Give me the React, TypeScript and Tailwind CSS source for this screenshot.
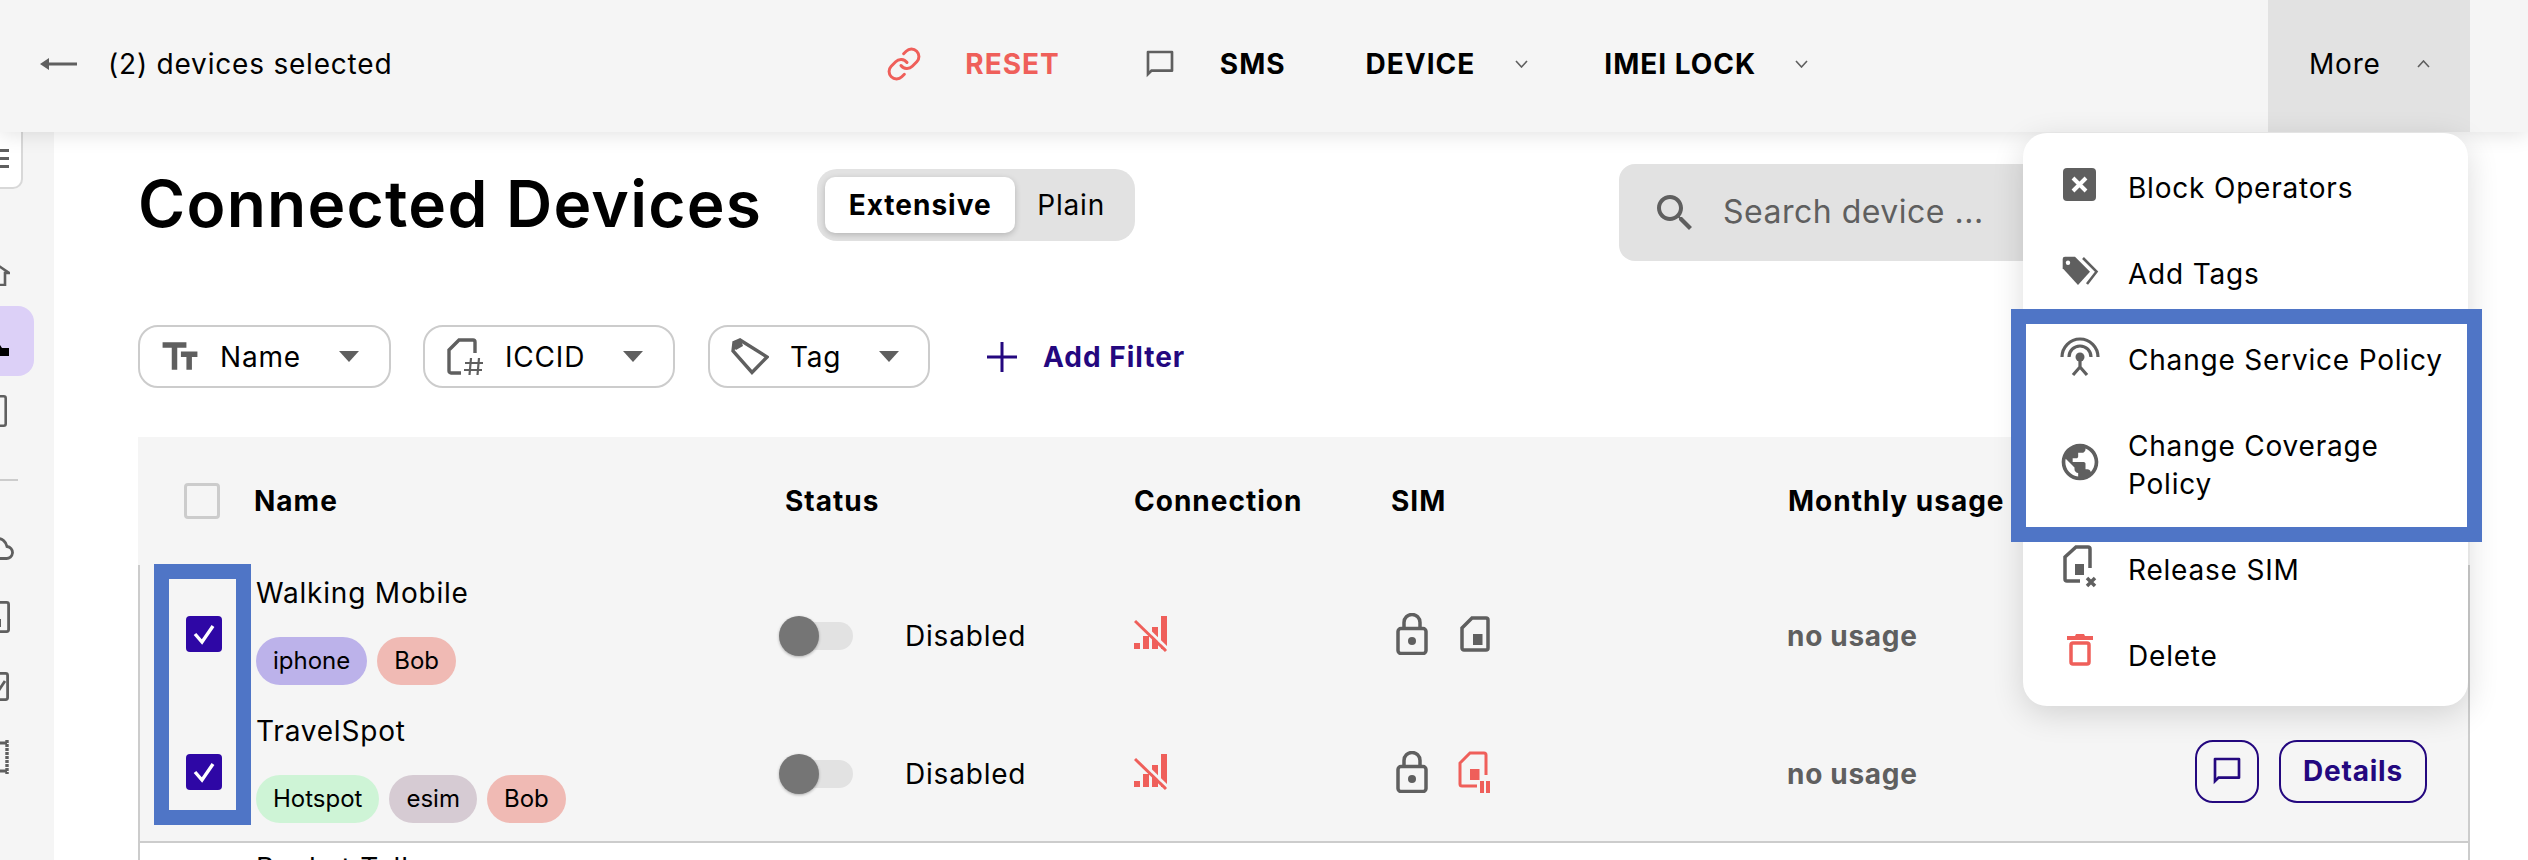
import React from "react";
import { Link } from "lucide-react";

const GRAY = "#5f5f5f";
const RED = "#ef5f5a";
const INDIGO = "#24087f";

const Chevron = ({ up }: { up?: boolean }) => (
  <svg width="13" height="8" viewBox="0 0 13 8" fill="none" stroke={GRAY} strokeWidth="1.6" className="shrink-0">
    <path d={up ? "M1 7l5.5-6L12 7" : "M1 1l5.5 6L12 1"} />
  </svg>
);

const Caret = () => (
  <svg width="20" height="11" viewBox="0 0 20 11" fill={GRAY} className="shrink-0">
    <path d="M0 0h20L10 11z" />
  </svg>
);

const ChatIcon = ({ color }: { color: string }) => (
  <svg width="32" height="32" viewBox="0 0 24 24" fill={color} fillRule="evenodd" className="shrink-0">
    <path d="M3 2h18a1 1 0 0 1 1 1v14a1 1 0 0 1-1 1H6l-4 4V3a1 1 0 0 1 1-1zm1 2v13.2L5.2 16H20V4z" />
  </svg>
);

const SignalOff = () => (
  <svg width="34" height="38" viewBox="0 0 34 38" className="shrink-0">
    <g fill={RED}>
      <rect x="0" y="28" width="6" height="6" />
      <rect x="9" y="21" width="6" height="13" />
      <rect x="18" y="12" width="6" height="22" />
      <rect x="27" y="1" width="6" height="33" />
    </g>
    <path d="M3 4l32 31" stroke="#f5f5f5" strokeWidth="3" />
    <path d="M1 6l31 30" stroke={RED} strokeWidth="3" />
  </svg>
);

const LockIcon = () => (
  <svg width="32" height="42" viewBox="0 0 32 42" fill="none" stroke={GRAY} strokeWidth="3.5" className="shrink-0">
    <rect x="2" y="15.5" width="28" height="25" rx="3" />
    <path d="M8 15V9.5a8 8 0 0 1 16 0V15" />
    <circle cx="16" cy="28" r="4" fill={GRAY} stroke="none" />
  </svg>
);

const SimIcon = () => (
  <svg width="30" height="36" viewBox="0 0 30 36" fill="none" stroke={GRAY} strokeWidth="3.5" className="ml-[32px] shrink-0">
    <path d="M2 12L12 2h14a2 2 0 0 1 2 2v28a2 2 0 0 1-2 2H4a2 2 0 0 1-2-2z" />
    <rect x="13" y="18" width="9.5" height="11" fill={GRAY} stroke="none" />
  </svg>
);

const SimPaused = () => (
  <svg width="34" height="44" viewBox="0 0 34 44" fill="none" stroke={RED} strokeWidth="3" className="ml-[29px] shrink-0">
    <path d="M20 36H5a2 2 0 0 1-2-2V13L13 3h14a2 2 0 0 1 2 2v20" />
    <g fill={RED} stroke="none">
      <rect x="13" y="19" width="9.5" height="11" />
      <rect x="23" y="31" width="4" height="12" />
      <rect x="29" y="31" width="4" height="12" />
    </g>
  </svg>
);

const Chip = ({ label, color }: { label: string; color: string }) => (
  <span className={`h-12 px-[17px] rounded-full flex items-center text-[24px] text-black ${color}`}>{label}</span>
);

const Toggle = () => (
  <div className="relative w-[74px] h-[40px] flex items-center -ml-[6px] shrink-0">
    <div className="h-[28px] w-[64px] ml-[10px] rounded-full bg-[#e2e2e2]" />
    <div className="absolute left-0 top-0 w-[40px] h-[40px] rounded-full bg-[#757575] shadow-[0_1px_3px_rgba(0,0,0,0.3)]" />
  </div>
);

const Check = () => (
  <div className="w-9 h-9 rounded-[4px] bg-[#2e07a5] flex items-center justify-center">
    <svg width="26" height="26" viewBox="0 0 26 26" fill="none" stroke="#fff" strokeWidth="3.4">
      <path d="M4 13l7 8L22 5" />
    </svg>
  </div>
);

const FilterButton = ({ icon, label, width, gap }: { icon: React.ReactNode; label: string; width: string; gap: string }) => (
  <div className={`h-[63px] border-2 border-[#cccccc] rounded-[20px] flex items-center bg-white text-[28px] tracking-[0.8px] text-black ${width}`}>
    <div className="w-[80px] flex justify-center shrink-0">{icon}</div>
    <span>{label}</span>
    <div className={`ml-auto ${gap}`}>
      <Caret />
    </div>
  </div>
);

const Row = ({ name, chips, sim, actions }: { name: string; chips: { label: string; color: string }[]; sim: React.ReactNode; actions?: boolean }) => (
  <div className="h-[138px] grid grid-cols-[114px_531px_349px_257px_396px_1fr] items-center">
    <div className="pl-[46px]">
      <Check />
    </div>
    <div className="self-start pl-[2px] pt-[10px]">
      <div className="text-[28px] leading-9 tracking-[0.8px] text-black">{name}</div>
      <div className="flex gap-[10px] mt-[26px]">
        {chips.map((c, i) => (
          <Chip key={i} {...c} />
        ))}
      </div>
    </div>
    <div className="flex items-center mt-1">
      <Toggle />
      <span className="ml-[52px] text-[28px] tracking-[0.8px] text-black">Disabled</span>
    </div>
    <div>
      <SignalOff />
    </div>
    <div className="flex items-center pl-[5px]">
      <LockIcon />
      {sim}
    </div>
    <div className="flex items-center mt-1">
      <span className="text-[28px] font-bold tracking-[0.7px] text-[#5f5f5f]">no usage</span>
      {actions && (
        <div className="ml-auto mr-[41px] -mt-[6px] flex gap-[20px]">
          <div className="w-[64px] h-[63px] border-2 border-[#24087f] rounded-[18px] flex items-center justify-center">
            <ChatIcon color={INDIGO} />
          </div>
          <div className="w-[148px] h-[63px] border-2 border-[#24087f] rounded-[18px] flex items-center justify-center text-[28px] font-bold tracking-[0.8px] text-[#24087f]">
            Details
          </div>
        </div>
      )}
    </div>
  </div>
);

const MenuItem = ({ icon, children, danger }: { icon: React.ReactNode; children: React.ReactNode; danger?: boolean }) => (
  <div className="flex items-center py-6 pl-[35px]">
    <div className={`w-[44px] h-[38px] flex items-center justify-center shrink-0 -translate-y-[3px] ${danger ? "text-[#ef5f5a]" : "text-[#5f5f5f]"}`}>{icon}</div>
    <div className="ml-[26px] w-[320px] text-[28px] leading-[38px] tracking-[0.8px] text-black">{children}</div>
  </div>
);

function ActionMenu() {
  return (
    <div className="absolute left-[2023px] top-[133px] w-[445px] bg-white rounded-[24px] pt-3 pb-[7px] shadow-[0_8px_32px_rgba(0,0,0,0.14)] z-20">
      <MenuItem
        icon={
          <svg width="44" height="44" viewBox="0 0 44 44" className="shrink-0">
            <rect x="5" y="5" width="33" height="33" rx="4" fill="currentColor" />
            <path d="M15 15l13 13M28 15L15 28" stroke="#fff" strokeWidth="4" />
          </svg>
        }
      >
        Block Operators
      </MenuItem>
      <MenuItem
        icon={
          <svg width="44" height="44" viewBox="0 0 44 44" fill="none" className="shrink-0">
            <path d="M7 7.7h10L32 22.7 20 36 4.7 19.3V10a2.3 2.3 0 0 1 2.3-2.3z" fill="currentColor" />
            <circle cx="10" cy="13.7" r="2.2" fill="#fff" />
            <path d="M25 9l13.5 13.7L29 35" stroke="currentColor" strokeWidth="2.6" />
          </svg>
        }
      >
        Add Tags
      </MenuItem>
      <MenuItem
        icon={
          <svg width="44" height="44" viewBox="0 0 44 44" fill="none" stroke="currentColor" strokeWidth="3.2" className="shrink-0">
            <path d="M4 22a18 18 0 0 1 36 0" />
            <path d="M11 22a11 11 0 0 1 22 0" />
            <circle cx="22" cy="22" r="4.5" fill="currentColor" stroke="none" />
            <path d="M22 22v10l-7 8M22 32l7 8" />
          </svg>
        }
      >
        Change Service Policy
      </MenuItem>
      <MenuItem
        icon={
          <svg width="44" height="44" viewBox="0 0 24 24" fill="currentColor" className="shrink-0">
            <path d="M12 2C6.48 2 2 6.48 2 12s4.48 10 10 10 10-4.48 10-10S17.52 2 12 2zm-1 17.93c-3.95-.49-7-3.85-7-7.93 0-.62.08-1.21.21-1.79L9 15v1c0 1.1.9 2 2 2v1.93zm6.9-2.54c-.26-.81-1-1.39-1.9-1.39h-1v-3c0-.55-.45-1-1-1H8v-2h2c.55 0 1-.45 1-1V7h2c1.1 0 2-.9 2-2v-.41c2.93 1.19 5 4.06 5 7.41 0 2.08-.8 3.97-2.1 5.39z" />
          </svg>
        }
      >
        Change Coverage Policy
      </MenuItem>
      <MenuItem
        icon={
          <svg width="44" height="46" viewBox="0 0 44 46" fill="none" stroke="currentColor" strokeWidth="3.5" className="shrink-0">
            <path d="M22 37H9a2 2 0 0 1-2-2V13L18 3h12a2 2 0 0 1 2 2v19" />
            <rect x="17" y="20" width="9" height="11" fill="currentColor" stroke="none" />
            <path d="M29 34l8 8M37 34l-8 8" />
          </svg>
        }
      >
        Release SIM
      </MenuItem>
      <MenuItem
        danger
        icon={
          <svg width="44" height="44" viewBox="0 0 44 44" fill="none" className="shrink-0">
            <rect x="13" y="12" width="18" height="21" rx="2" stroke="currentColor" strokeWidth="3.5" />
            <path d="M9 5h8l1-2h8l1 2h8v4H9z" fill="currentColor" />
          </svg>
        }
      >
        Delete
      </MenuItem>
    </div>
  );
}

function Sidebar() {
  return (
    <aside className="w-[54px] shrink-0 bg-[#f5f5f5] overflow-hidden flex flex-col">
      <div className="w-[23px] h-[57px] bg-white border-r-2 border-b-2 border-[#d8d8d8] rounded-br-[10px] pt-[17px] flex flex-col gap-[5px]">
        <div className="h-[3px] w-[9px] bg-[#5f5f5f]" />
        <div className="h-[3px] w-[9px] bg-[#5f5f5f]" />
        <div className="h-[3px] w-[9px] bg-[#5f5f5f]" />
      </div>
      <div className="w-[10px] h-[23px] mt-[74px] flex justify-end">
        <svg width="28" height="23" viewBox="0 0 28 23" fill="none" stroke={GRAY} strokeWidth="2.6" className="shrink-0">
          <path d="M5 22V10H1L14 1l13 9h-4v12z" />
        </svg>
      </div>
      <div className="w-[34px] h-[70px] mt-5 bg-[#dcd0f7] rounded-r-[16px] pt-[39px] flex items-start">
        <svg width="9" height="11" viewBox="0 0 9 11" fill="#000" className="shrink-0">
          <path d="M0 0l2 3h7v8H0z" />
        </svg>
      </div>
      <div className="w-[7px] h-[32px] mt-[19px] flex justify-end">
        <svg width="26" height="32" viewBox="0 0 26 32" fill="none" stroke={GRAY} strokeWidth="2.6" className="shrink-0">
          <rect x="1.3" y="1.3" width="23.4" height="29.4" rx="2" />
          <rect x="0" y="20" width="6" height="6" fill={GRAY} stroke="none" />
        </svg>
      </div>
      <div className="w-[18px] h-[2px] mt-[52px] bg-[#cccccc]" />
      <div className="w-[14px] h-[23px] mt-[56px] flex justify-end">
        <svg width="34" height="23" viewBox="0 0 34 23" fill="none" stroke={GRAY} strokeWidth="2.8" className="shrink-0">
          <path d="M8 21.5a6.5 6.5 0 0 1 0-13C10 4 14 1.5 18 1.5c4 0 8 3 9 8a6 6 0 0 1-1 12z" />
        </svg>
      </div>
      <div className="w-[10px] h-[32px] mt-[41px] flex justify-end">
        <svg width="26" height="32" viewBox="0 0 26 32" fill="none" stroke={GRAY} strokeWidth="2.8" className="shrink-0">
          <rect x="1.4" y="1.4" width="23.2" height="29.2" rx="2" />
          <rect x="6" y="18" width="11" height="8" fill={GRAY} stroke="none" />
        </svg>
      </div>
      <div className="w-[9px] h-[29px] mt-[39px] flex justify-end">
        <svg width="26" height="29" viewBox="0 0 26 29" fill="none" stroke={GRAY} strokeWidth="2.8" className="shrink-0">
          <rect x="1.4" y="1.4" width="23.2" height="26.2" rx="2" />
          <path d="M12 16l4 2 6-9" />
        </svg>
      </div>
      <div className="w-[11px] h-[36px] mt-[38px] flex justify-end">
        <svg width="26" height="36" viewBox="0 0 26 36" fill="none" stroke={GRAY} strokeWidth="2.8" className="shrink-0">
          <path d="M22 1v34" strokeDasharray="3 1" strokeWidth="3.4" />
          <path d="M1 4h21M1 32h21" />
          <rect x="2" y="9" width="6" height="3" fill={GRAY} stroke="none" />
        </svg>
      </div>
    </aside>
  );
}

function App() {
  return (
    <div className="relative w-full h-[860px] overflow-hidden bg-white font-['Inter',sans-serif] text-black">
      <header className="relative z-10 h-[132px] pb-1 flex items-center bg-[#f5f5f5] shadow-[0_2px_20px_rgba(0,0,0,0.12)]">
        <svg width="37" height="14" viewBox="0 0 37 14" fill={GRAY} className="ml-[40px] shrink-0">
          <path d="M0 7l9-6v4.5h28v3H9V13z" />
        </svg>
        <span className="ml-[31px] text-[28px] tracking-[0.8px] text-black">(2) devices selected</span>
        <Link size={36} color={RED} strokeWidth={2} className="ml-[494px] shrink-0" />
        <span className="ml-[43px] text-[28px] font-bold tracking-[1px] text-[#ef5f5a]">RESET</span>
        <div className="ml-[84px]">
          <ChatIcon color={GRAY} />
        </div>
        <span className="ml-[44px] text-[28px] font-bold tracking-[1px]">SMS</span>
        <span className="ml-[80px] text-[28px] font-bold tracking-[1px]">DEVICE</span>
        <div className="ml-[40px]">
          <Chevron />
        </div>
        <span className="ml-[76px] text-[28px] font-bold tracking-[1px]">IMEI LOCK</span>
        <div className="ml-[39px]">
          <Chevron />
        </div>
        <div className="ml-auto mr-[58px] w-[202px] self-stretch -mb-1 pb-1 bg-[#e2e2e2] flex items-center pl-[41px]">
          <span className="text-[28px] tracking-[0.8px]">More</span>
          <div className="ml-[36px]">
            <Chevron up />
          </div>
        </div>
      </header>

      <div className="flex h-[728px]">
        <Sidebar />
        <main className="flex-1 pl-[84px] pr-[58px] pt-8">
          <div className="flex items-start">
            <h1 className="h-[80px] leading-[80px] text-[64px] font-semibold tracking-[1.25px]">Connected Devices</h1>
            <div className="ml-[55px] mt-[5px] w-[318px] h-[72px] rounded-[20px] bg-[#e2e2e2] p-2 flex items-center">
              <div className="w-[190px] h-14 rounded-[10px] bg-white shadow-[0_2px_6px_rgba(0,0,0,0.2)] flex items-center justify-center text-[28px] font-bold tracking-[1px]">
                Extensive
              </div>
              <div className="flex-1 text-center text-[28px] tracking-[0.8px]">Plain</div>
            </div>
            <div className="ml-auto mr-[43px] w-[808px] h-[97px] rounded-[16px] bg-[#e2e2e2] flex items-center pl-8">
              <svg width="48" height="48" viewBox="0 0 24 24" fill={GRAY} className="shrink-0">
                <path d="M15.5 14h-.79l-.28-.27C15.41 12.59 16 11.11 16 9.5 16 5.91 13.09 3 9.5 3S3 5.91 3 9.5 5.91 16 9.5 16c1.61 0 3.09-.59 4.23-1.57l.27.28v.79l5 4.99L20.49 19l-4.99-5zm-6 0C7.01 14 5 11.99 5 9.5S7.01 5 9.5 5 14 7.01 14 9.5 11.99 14 9.5 14z" />
              </svg>
              <span className="ml-[24px] pb-[2px] text-[32px] tracking-[0.5px] text-[#5f5f5f]">Search device ...</span>
            </div>
          </div>

          <div className="flex items-center mt-16">
            <FilterButton
              width="w-[253px]"
              gap="mr-[30px]"
              label="Name"
              icon={
                <svg width="44" height="44" viewBox="0 0 24 24" fill={GRAY}>
                  <path d="M2.5 4v3h5v12h3V7h5V4h-13zm19 5h-9v3h3v7h3v-7h3V9z" />
                </svg>
              }
            />
            <div className="ml-[32px]">
              <FilterButton
                width="w-[252px]"
                gap="mr-[30px]"
                label="ICCID"
                icon={
                  <svg width="37" height="37" viewBox="0 0 37 37" fill="none" stroke={GRAY} strokeWidth="3.4">
                    <path d="M14 35H4a2 2 0 0 1-2-2V12L12 2h14a2 2 0 0 1 2 2v11" />
                    <path d="M24 20l-1.5 17M32 20l-1.5 17M18 25h18M17 32h18" strokeWidth="2.2" />
                  </svg>
                }
              />
            </div>
            <div className="ml-[33px]">
              <FilterButton
                width="w-[222px]"
                gap="mr-[29px]"
                label="Tag"
                icon={
                  <svg width="38" height="37" viewBox="0 0 38 37" fill="none" stroke={GRAY} strokeWidth="3.4">
                    <path d="M3 4.5L9 2l27 17-15 15.5L2 13z" />
                    <path d="M3 3l7-1 2 6-7 4-3-3z" fill={GRAY} stroke="none" />
                  </svg>
                }
              />
            </div>
            <svg width="30" height="30" viewBox="0 0 30 30" fill={INDIGO} className="ml-[57px] shrink-0">
              <path d="M13.5 0h3v13.5H30v3H16.5V30h-3V16.5H0v-3h13.5z" />
            </svg>
            <span className="ml-[26px] text-[28px] font-bold tracking-[1px] text-[#24087f]">Add Filter</span>
          </div>

          <div className="mt-[49px]">
            <div className="h-[128px] bg-[#f5f5f5] grid grid-cols-[116px_531px_349px_257px_1fr] items-center text-[28px] font-bold tracking-[1px]">
              <div className="pl-[46px]">
                <div className="w-9 h-9 rounded-[4px] border-[3px] border-[#cccccc]" />
              </div>
              <span>Name</span>
              <span>Status</span>
              <span>Connection</span>
              <div className="grid grid-cols-[397px_1fr]">
                <span>SIM</span>
                <span>Monthly usage</span>
              </div>
            </div>
            <div className="border-x-2 border-[#cccccc]">
              <div className="bg-[#f5f5f5] border-b-2 border-[#cccccc]">
                <Row
                  name="Walking Mobile"
                  sim={<SimIcon />}
                  chips={[
                    { label: "iphone", color: "bg-[#bcb2ea]" },
                    { label: "Bob", color: "bg-[#f0bab4]" },
                  ]}
                />
                <Row
                  name="TravelSpot"
                  sim={<SimPaused />}
                  actions
                  chips={[
                    { label: "Hotspot", color: "bg-[#cef4d6]" },
                    { label: "esim", color: "bg-[#d6cbd3]" },
                    { label: "Bob", color: "bg-[#f0bab4]" },
                  ]}
                />
              </div>
              <div className="pl-[116px] pt-[7px] text-[28px] leading-9 tracking-[0.8px]">Pocket Tally</div>
            </div>
          </div>
        </main>
      </div>

      <ActionMenu />

      {/* annotation boxes drawn over the screenshot */}
      <div className="absolute left-[2011px] top-[309px] w-[471px] h-[233px] border-[15px] border-[#4f75c6] z-30" />
      <div className="absolute left-[154px] top-[564px] w-[97px] h-[261px] border-[15px] border-[#4f75c6] z-30" />
    </div>
  );
}

export default App;
